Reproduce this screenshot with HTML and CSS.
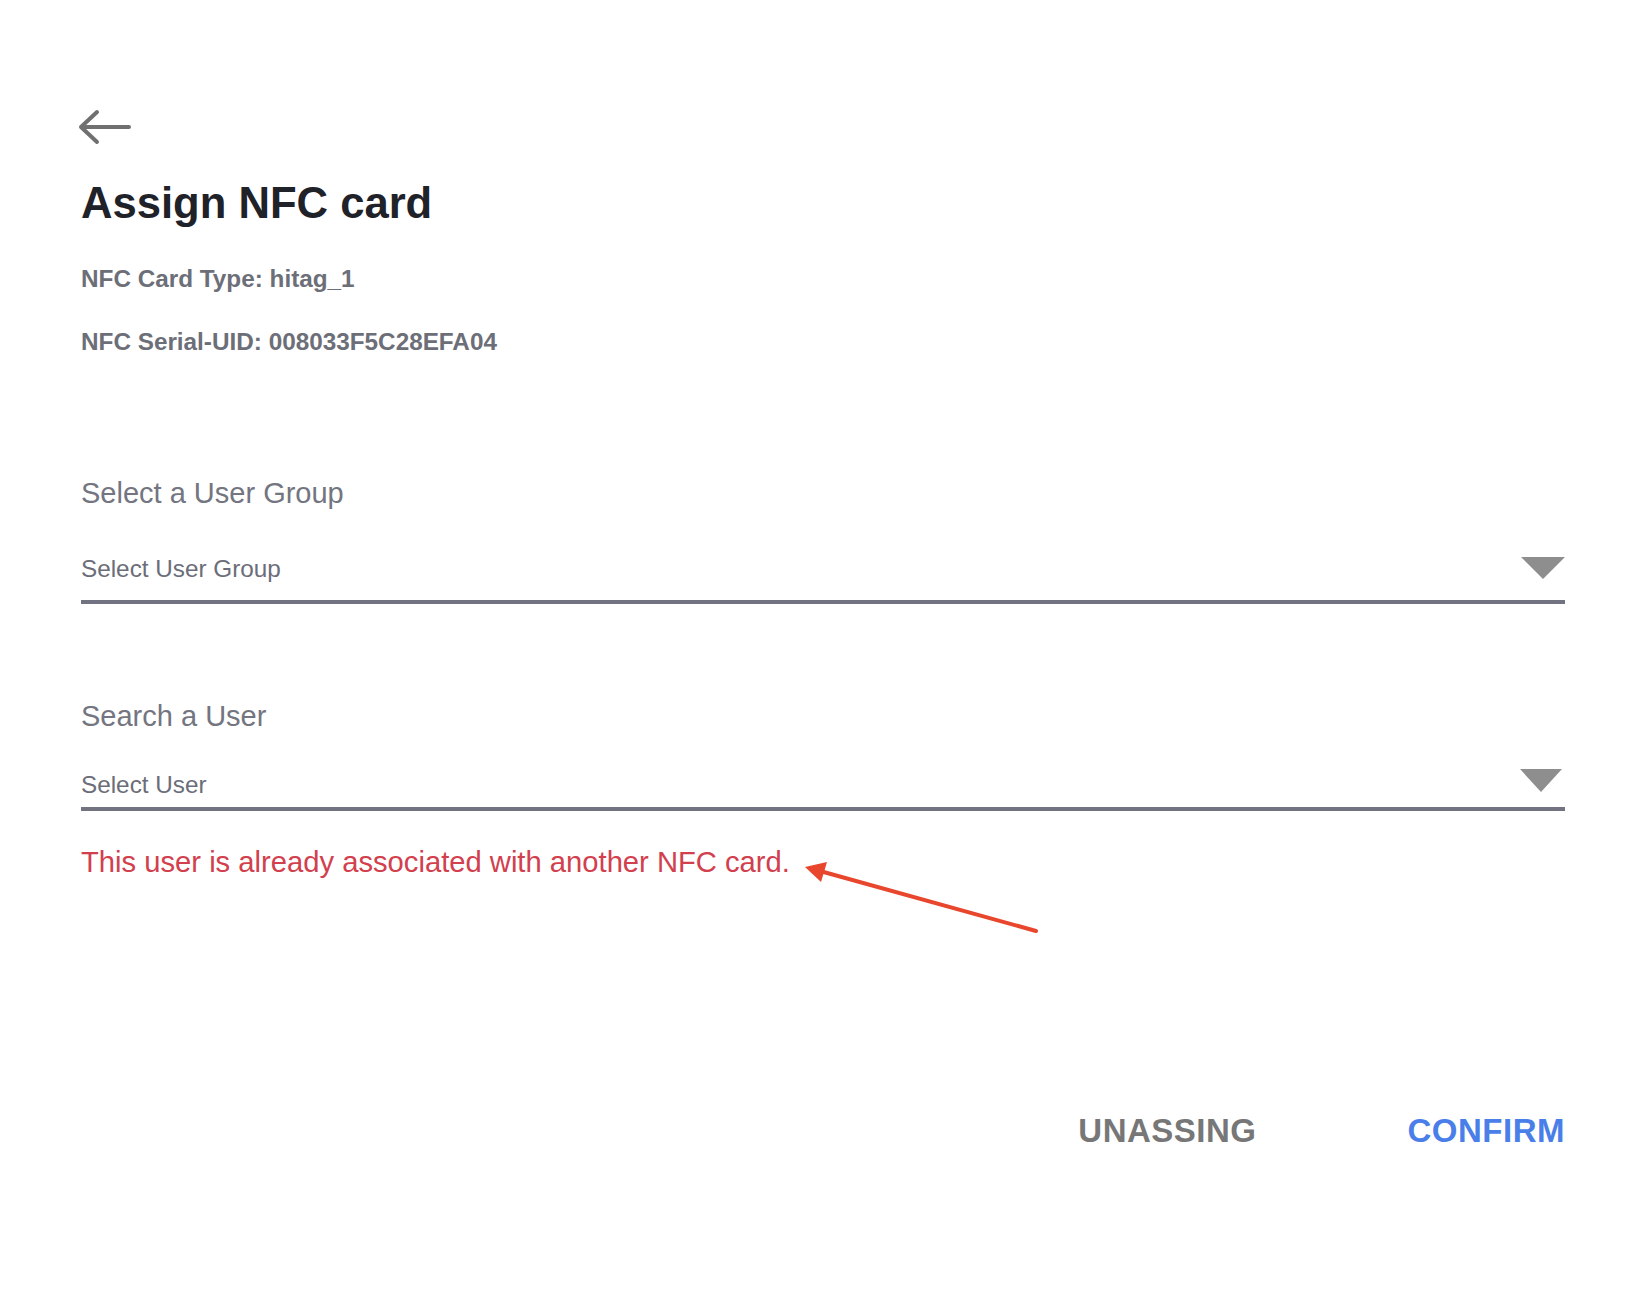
FILE: index.html
```html
<!DOCTYPE html>
<html lang="en">
<head>
<meta charset="utf-8">
<title>Assign NFC card</title>
<link rel="stylesheet" href="styles.css">
</head>
<body>
<main class="page">
  <button class="back" aria-label="Back">
    <svg class="back-icon" width="60" height="44" viewBox="0 0 60 44">
      <path d="M22 7 L6 22 L22 37 M6 22 L54 22" fill="none" stroke="#707070" stroke-width="4" stroke-linecap="round" stroke-linejoin="round"/>
    </svg>
  </button>
  <h1 class="title">Assign NFC card</h1>
  <p class="info info-type">NFC Card Type: hitag_1</p>
  <p class="info info-uid">NFC Serial-UID: 008033F5C28EFA04</p>

  <section class="field field-group">
    <div class="label">Select a User Group</div>
    <div class="select select-group">
      <span class="placeholder">Select User Group</span>
      <span class="caret caret-group"></span>
    </div>
  </section>

  <section class="field field-user">
    <div class="label">Search a User</div>
    <div class="select select-user">
      <span class="placeholder">Select User</span>
      <span class="caret caret-user"></span>
    </div>
  </section>

  <p class="error">This user is already associated with another NFC card.</p>

  <div class="actions">
    <button class="btn btn-unassign">UNASSING</button>
    <button class="btn btn-confirm">CONFIRM</button>
  </div>

  <svg class="annotation" width="260" height="90" viewBox="0 0 260 90">
    <line x1="246" y1="81" x2="30" y2="21" stroke="#e8462d" stroke-width="4" stroke-linecap="round"/>
    <polygon points="15,17 37,12 31,32" fill="#e8462d"/>
  </svg>
</main>
</body>
</html>
```

FILE: styles.css
```css
* {
  box-sizing: border-box;
}

html, body {
  margin: 0;
  padding: 0;
  background: #ffffff;
}

body {
  font-family: "Liberation Sans", Arial, Helvetica, sans-serif;
}

.page {
  position: relative;
  width: 1648px;
  min-height: 1316px;
  padding: 105px 83px 0 81px;
  display: flex;
  flex-direction: column;
}

.back {
  display: block;
  width: 60px;
  height: 44px;
  margin: 0 0 0 -6px;
  padding: 0;
  border: 0;
  background: transparent;
  cursor: pointer;
}

.back-icon {
  display: block;
}

.title {
  margin: 33px 0 0;
  font-size: 43.6px;
  line-height: 43px;
  font-weight: 700;
  color: #1f2229;
}

.info {
  margin: 0;
  font-size: 24.3px;
  line-height: 24px;
  font-weight: 700;
  color: #6c6e78;
}

.info-type {
  margin-top: 42px;
}

.info-uid {
  margin-top: 39px;
}

.field {
  display: flex;
  flex-direction: column;
}

.field-group {
  margin-top: 125px;
}

.field-user {
  margin-top: 98px;
}

.label {
  font-size: 29px;
  line-height: 28px;
  color: #737580;
}

.select {
  display: flex;
  align-items: flex-start;
  justify-content: space-between;
  border-bottom: 4px solid #727380;
}

.select-group {
  margin-top: 50px;
  padding-bottom: 19px;
}

.select-user {
  margin-top: 43px;
  padding-bottom: 10px;
}

.placeholder {
  font-size: 24.3px;
  line-height: 24px;
  color: #6b6d78;
}

.caret {
  width: 0;
  height: 0;
  border-left: 22px solid transparent;
  border-right: 22px solid transparent;
  border-top: 22px solid #8e8e8e;
}

.caret-user {
  margin-top: -4px;
  margin-right: 3px;
  border-top-width: 23px;
  border-left-width: 21.5px;
  border-right-width: 21.5px;
}

.error {
  margin: 37px 0 0;
  font-size: 29.2px;
  line-height: 29px;
  color: #d2404d;
}

.actions {
  margin-top: 238px;
  display: flex;
  justify-content: flex-end;
  gap: 151px;
}

.btn {
  margin: 0;
  padding: 0;
  border: 0;
  background: transparent;
  font-family: "Liberation Sans", Arial, Helvetica, sans-serif;
  font-size: 33px;
  line-height: 32px;
  font-weight: 700;
  letter-spacing: 0.5px;
  cursor: pointer;
}

.btn-unassign {
  color: #777777;
}

.btn-confirm {
  color: #4a7fe9;
}

.annotation {
  position: absolute;
  left: 790px;
  top: 850px;
  pointer-events: none;
}
```
